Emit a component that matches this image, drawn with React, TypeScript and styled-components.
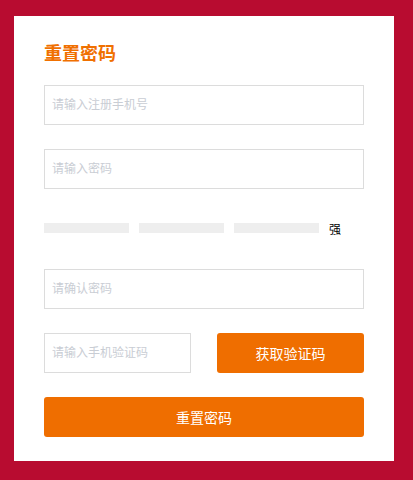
import * as React from 'react';
import styled, { createGlobalStyle } from 'styled-components';

const GlobalStyle = createGlobalStyle`
    html, body {
        margin: 0;
        padding: 0;
        background-color: #b80c30;
        font-family: "Liberation Sans", "Noto Sans CJK SC", sans-serif;
    }`;

const Page = styled.div`
    width: 413px;
    height: 480px;
    box-sizing: border-box;
    padding: 16px 19px 19px 14px;`;

const Card = styled.div`
    background-color: #fff;
    width: 380px;
    height: 445px;
    box-sizing: border-box;
    padding: 27px 30px 24px 30px;
    display: flex;
    flex-direction: column;`;

const Title = styled.h2`
    margin: 0 0 20px 0;
    font-size: 18px;
    line-height: 22px;
    font-weight: bold;
    color: #f07000;`;

const Field = styled.input<{ $width?: number }>`
    box-sizing: border-box;
    width: ${p => p.$width ? p.$width + 'px' : '100%'};
    height: 40px;
    border: 1px solid #dcdcdc;
    padding: 0 7px;
    font-size: 12px;
    font-family: inherit;
    outline: none;
    color: #333;
    &::placeholder {
        color: #c9cdd4;
    }`;

const Row = styled.div<{ $gap?: number }>`
    display: flex;
    align-items: center;
    margin-top: ${p => p.$gap || 24}px;`;

const StrengthRow = styled.div`
    display: flex;
    align-items: center;
    gap: 10px;
    height: 10px;
    margin: 34px 0 36px 0;`;

const Bar = styled.div`
    width: 85px;
    height: 10px;
    background-color: #eee;`;

const StrengthLabel = styled.span`
    font-size: 12px;
    color: #000;`;

const Button = styled.button<{ $full?: boolean }>`
    box-sizing: border-box;
    width: ${p => p.$full ? '100%' : '147px'};
    height: 40px;
    border: none;
    border-radius: 3px;
    background-color: #ef6e00;
    color: #fff;
    font-size: 14px;
    font-family: inherit;
    margin-left: ${p => p.$full ? '0' : 'auto'};
    cursor: pointer;`;

class App extends React.Component {
    render() {
        return (
            <Page>
                <GlobalStyle/>
                <Card>
                    <Title>重置密码</Title>
                    <Field placeholder="请输入注册手机号"/>
                    <Row><Field type="password" placeholder="请输入密码"/></Row>
                    <StrengthRow>
                        <Bar/><Bar/><Bar/>
                        <StrengthLabel>强</StrengthLabel>
                    </StrengthRow>
                    <Field type="password" placeholder="请确认密码"/>
                    <Row>
                        <Field $width={147} placeholder="请输入手机验证码"/>
                        <Button>获取验证码</Button>
                    </Row>
                    <Row><Button $full>重置密码</Button></Row>
                </Card>
            </Page>
        );
    }
}

export default App;
